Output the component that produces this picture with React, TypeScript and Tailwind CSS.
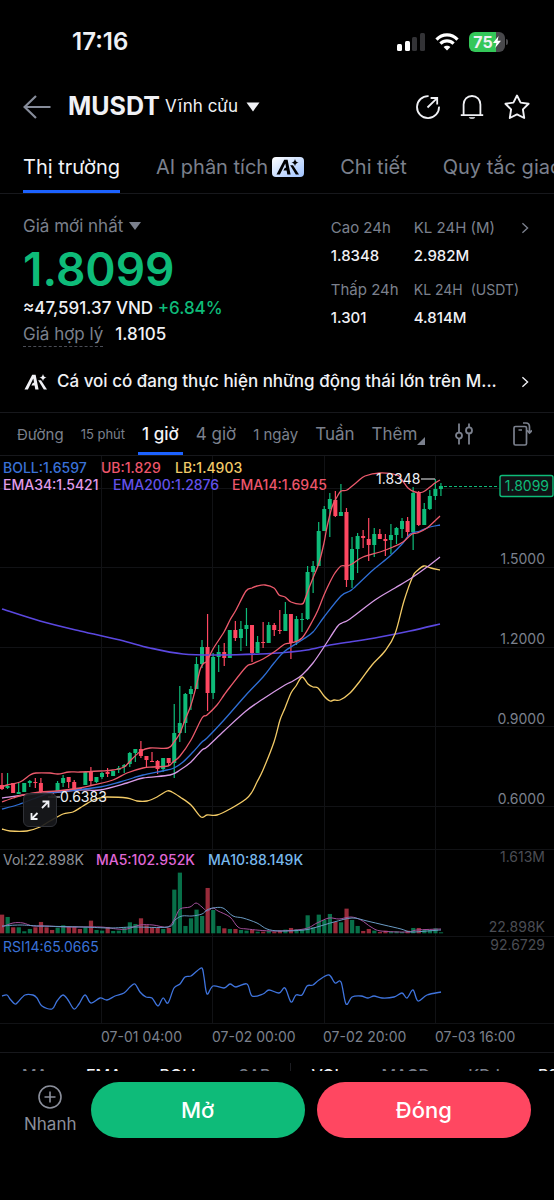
import { clsx } from "clsx";

const tabs = [
  { label: "Thị trường", active: true },
  { label: "AI phân tích", badge: true },
  { label: "Chi tiết" },
  { label: "Quy tắc giao dịch" },
];

const periods = [
  { label: "Đường", className: "text-[15px]" },
  { label: "15 phút", className: "text-[13px]" },
  { label: "1 giờ", className: "text-[17px]", active: true },
  { label: "4 giờ", className: "text-[17px]" },
  { label: "1 ngày", className: "text-[15px]" },
  { label: "Tuần", className: "text-[17px]" },
];

const indicators = [
  { label: "MA", on: false },
  { label: "EMA", on: true },
  { label: "BOLL", on: true },
  { label: "SAR", on: false },
  { label: "VOL", on: true, divider: true },
  { label: "MACD", on: false },
  { label: "KDJ", on: false },
  { label: "RSI", on: true },
];

const GREEN = "#0ebb79";
const RED = "#ff4761";

// 1 = up, 0 = down, then body top, body bottom, wick top, wick bottom
const candles: number[][] = [
  [0, 785, 789, 773, 790], [1, 786, 788, 773, 789], [0, 783, 793, 783, 793], [1, 792, 794, 783, 794],
  [1, 783, 792, 783, 792], [1, 781, 783, 780, 787], [0, 782, 783, 778, 788], [0, 783, 792, 778, 793],
  [0, 791, 792, 791, 792], [0, 791, 794, 791, 796], [1, 783, 791, 781, 791], [1, 778, 783, 775, 787],
  [0, 777, 782, 777, 788], [0, 782, 791, 780, 791], [0, 788, 790, 788, 790], [1, 772, 785, 771, 785],
  [0, 772, 781, 767, 785], [1, 777, 782, 777, 783], [1, 773, 777, 772, 779], [0, 772, 774, 768, 777],
  [1, 771, 776, 771, 776], [1, 768, 770, 766, 773], [1, 765, 767, 764, 773], [1, 753, 764, 752, 767],
  [1, 749, 753, 749, 762], [0, 749, 756, 741, 758], [0, 756, 760, 756, 768], [0, 761, 762, 752, 762],
  [0, 761, 769, 760, 774], [1, 758, 769, 758, 772], [0, 758, 763, 758, 766], [1, 733, 763, 704, 778],
  [1, 723, 733, 686, 742], [1, 694, 723, 693, 733], [1, 689, 694, 686, 710], [1, 664, 689, 657, 689],
  [1, 647, 664, 640, 668], [0, 647, 693, 614, 711], [1, 657, 693, 653, 699], [1, 652, 657, 645, 672],
  [0, 652, 658, 643, 666], [1, 630, 658, 630, 658], [0, 630, 638, 621, 641], [1, 629, 638, 621, 651],
  [1, 625, 629, 608, 646], [0, 625, 653, 625, 662], [1, 642, 653, 636, 653], [0, 642, 643, 622, 648],
  [1, 625, 643, 622, 643], [0, 625, 630, 623, 636], [0, 630, 631, 610, 634], [1, 614, 631, 602, 631],
  [0, 614, 643, 614, 659], [1, 619, 641, 616, 645], [1, 619, 620, 613, 632], [1, 572, 619, 566, 620],
  [1, 566, 572, 561, 593], [1, 531, 566, 522, 566], [1, 509, 531, 506, 531], [1, 499, 509, 493, 537],
  [0, 500, 516, 491, 517], [1, 512, 516, 484, 516], [0, 512, 580, 508, 587], [1, 549, 580, 537, 588],
  [1, 536, 549, 533, 573], [0, 536, 538, 530, 548], [0, 539, 545, 518, 561], [1, 534, 545, 528, 557],
  [0, 534, 539, 529, 539], [0, 539, 541, 534, 556], [1, 535, 540, 524, 554], [1, 528, 535, 527, 544],
  [1, 521, 529, 518, 538], [0, 521, 532, 517, 536], [1, 493, 532, 487, 550], [0, 493, 525, 491, 526],
  [1, 509, 525, 503, 525], [1, 496, 509, 490, 510], [1, 489, 496, 479, 500], [1, 486, 489, 483, 496],
];

const volumes = [
  56, 49, 18, 18, 6, 13, 18, 34, 18, 10, 17, 24, 20, 20, 13, 18, 38, 10, 8, 19,
  7, 8, 18, 33, 28, 45, 24, 18, 17, 13, 16, 131, 182, 22, 45, 71, 52, 136, 70, 22,
  15, 13, 13, 10, 8, 10, 5, 5, 7, 5, 8, 11, 16, 12, 10, 54, 18, 56, 40, 58,
  34, 33, 74, 40, 22, 7, 13, 8, 4, 8, 6, 6, 4, 8, 16, 16, 10, 10, 15, 3,
];

const bollUpper = [
  2, 787, 7, 785, 20, 782, 30, 775, 36, 773, 50, 773, 58, 774, 69, 772, 80, 772, 100, 771, 113, 770, 124, 767, 132, 759,
  141, 751, 150, 748, 168, 748, 174, 742, 180, 733, 185, 720, 191, 705, 196, 687, 200, 670, 203, 664, 207, 661, 213, 649,
  224, 632, 230, 620, 236, 610, 246, 591, 252, 588, 257, 586, 265, 585, 274, 588, 279, 595, 285, 597, 291, 602, 302, 604,
  305, 599, 309, 588, 313, 578, 319, 563, 324, 543, 327, 527, 332, 507, 337, 497, 341, 491, 347, 490, 357, 482, 365, 476,
  380, 473, 397, 475, 402, 480, 408, 488, 415, 492, 423, 492, 430, 487, 435, 483, 440, 480,
];
const ema14 = [
  2, 802, 13, 798, 23, 795, 40, 792, 57, 791, 80, 788, 93, 785, 113, 780, 127, 773, 143, 768, 153, 767, 168, 766,
  173, 762, 180, 756, 191, 740, 202, 718, 207, 715, 217, 705, 224, 695, 230, 687, 246, 667, 252, 664, 263, 659,
  274, 652, 285, 644, 291, 643, 302, 638, 313, 620, 318, 610, 324, 595, 330, 582, 335, 573, 341, 566, 347, 566,
  352, 564, 363, 557, 380, 552, 393, 547, 403, 542, 412, 534, 417, 533, 427, 528, 440, 516,
];
const bollMid = [
  2, 809, 17, 805, 33, 799, 50, 793, 67, 791, 100, 787, 120, 782, 133, 778, 143, 775, 167, 770, 174, 768, 183, 762,
  193, 752, 202, 742, 207, 738, 224, 720, 246, 695, 263, 677, 274, 663, 285, 651, 302, 640, 313, 632, 324, 617,
  341, 596, 350, 591, 355, 587, 373, 570, 390, 556, 403, 543, 410, 534, 420, 531, 430, 527, 440, 525,
];
const ema34 = [
  2, 798, 33, 794, 50, 793, 80, 790, 100, 790, 127, 783, 143, 778, 170, 775, 180, 770, 191, 762, 202, 750, 207, 747,
  224, 731, 246, 711, 263, 699, 285, 685, 293, 681, 302, 675, 313, 663, 324, 647, 337, 627, 342, 623, 350, 619,
  375, 600, 395, 588, 413, 577, 427, 567, 440, 557,
];
const ema200 = [2, 609, 40, 621, 80, 631, 120, 640, 150, 648, 183, 654, 220, 655, 260, 654, 290, 652, 307, 650, 330, 645, 350, 642, 380, 637, 410, 631, 440, 624];
const bollLower = [
  2, 829, 10, 831, 27, 831, 40, 827, 50, 821, 63, 814, 73, 812, 83, 806, 93, 800, 100, 798, 107, 797, 127, 798, 137, 801,
  147, 801, 157, 797, 167, 791, 172, 792, 180, 797, 191, 805, 201, 817, 207, 815, 217, 815, 230, 809, 246, 799, 252, 792,
  257, 782, 263, 770, 274, 742, 280, 720, 285, 708, 291, 693, 296, 686, 302, 677, 308, 684, 313, 687, 318, 688, 324, 696,
  330, 701, 334, 700, 340, 700, 350, 693, 360, 681, 372, 665, 385, 651, 395, 634, 404, 601, 413, 576, 418, 570, 424, 566, 431, 568, 440, 570,
];
const ma5 = [
  2, 927, 13, 923, 23, 923, 33, 926, 47, 926, 67, 927, 100, 927, 117, 929, 127, 929, 140, 925, 153, 925, 168, 927,
  175, 918, 180, 909, 190, 907, 196, 903, 202, 907, 207, 911, 213, 908, 218, 911, 230, 917, 238, 927, 247, 929,
  274, 931, 304, 929, 317, 923, 329, 918, 339, 919, 351, 917, 361, 920, 371, 927, 381, 931, 407, 932, 417, 930, 441, 929,
];
const ma10 = [
  2, 926, 20, 925, 40, 926, 83, 927, 110, 928, 133, 927, 168, 927, 175, 920, 182, 916, 192, 916, 202, 914, 207, 910,
  213, 908, 223, 908, 233, 916, 243, 918, 257, 923, 267, 929, 280, 931, 304, 930, 317, 927, 334, 922, 352, 918,
  367, 921, 384, 925, 401, 929, 411, 932, 427, 931, 441, 930,
];
const rsi = [
  2, 996, 7, 995, 10, 999, 15, 1004, 18, 1002, 25, 995, 33, 995, 37, 998, 42, 1006, 52, 1009, 57, 1001, 63, 995, 68, 1000,
  74, 1009, 79, 1004, 85, 995, 91, 1003, 100, 998, 107, 1000, 115, 996, 124, 993, 130, 987, 135, 984, 140, 992, 146, 997,
  152, 998, 158, 1006, 163, 998, 168, 1003, 174, 988, 180, 984, 185, 977, 191, 976, 197, 971, 202, 968, 204, 977,
  207, 994, 213, 986, 224, 988, 230, 984, 236, 987, 247, 984, 252, 996, 263, 994, 269, 990, 279, 993, 285, 988, 291, 1002,
  296, 995, 302, 995, 307, 986, 313, 985, 319, 980, 329, 975, 335, 983, 341, 982, 346, 1004, 352, 997, 361, 996,
  368, 998, 374, 996, 382, 998, 394, 997, 402, 993, 407, 998, 413, 990, 418, 1001, 427, 995, 441, 992,
];

const candleX = (i: number) => 2 + i * 5.556;

// flat [x, y, x, y, ...] list to a smooth path through every point
function smooth(flat: number[]) {
  const n = flat.length / 2;
  const at = (i: number) => {
    const k = Math.max(0, Math.min(n - 1, i));
    return [flat[k * 2], flat[k * 2 + 1]];
  };
  let d = `M${flat[0]} ${flat[1]}`;
  for (let i = 0; i < n - 1; i++) {
    const [p0, p1, p2, p3] = [at(i - 1), at(i), at(i + 1), at(i + 2)];
    d += `C${p1[0] + (p2[0] - p0[0]) / 6} ${p1[1] + (p2[1] - p0[1]) / 6} ${p2[0] - (p3[0] - p1[0]) / 6} ${p2[1] - (p3[1] - p1[1]) / 6} ${p2[0]} ${p2[1]}`;
  }
  return d;
}

function Line({ points, color, width = 1.3 }: { points: number[]; color: string; width?: number }) {
  return <path d={smooth(points)} fill="none" stroke={color} strokeWidth={width} strokeLinejoin="round" />;
}

function AiMark({ className }: { className?: string }) {
  return (
    <svg viewBox="0 0 24 16" className={className} fill="currentColor" aria-hidden="true">
      <path d="M0.5 15.5 L8.2 0.8 H11.6 L14.6 15.5 H11.3 L10.6 11.4 H7.4 L8.9 8.8 H10.1 L9.3 4.6 L3.9 15.5 Z" />
      <path d="M14.2 6.2 H17 L23 15.5 H19.8 Z" />
      <path d="M19 0 Q19.5 3 22.6 3.6 Q19.5 4.2 19 7.2 Q18.5 4.2 15.4 3.6 Q18.5 3 19 0 Z" />
    </svg>
  );
}

function Chevron({ className }: { className?: string }) {
  return (
    <svg viewBox="0 0 8 14" className={clsx("h-3 w-2", className)} fill="none" stroke="currentColor" strokeWidth="1.6" aria-hidden="true">
      <path d="M1 1.5 L7 7 L1 12.5" />
    </svg>
  );
}

function StatusBar() {
  return (
    <div className="flex h-[84px] items-center justify-between pr-[46px] pl-[72px]">
      <span className="text-2xl font-semibold">17:16</span>
      <div className="flex items-center gap-[10px]">
        <svg viewBox="0 0 28 18" className="h-[18px] w-7" aria-hidden="true">
          <rect x="0" y="11" width="5" height="7" rx="1.5" fill="#fff" />
          <rect x="8" y="8" width="5" height="10" rx="1.5" fill="#fff" />
          <rect x="15" y="4" width="5" height="14" rx="1.5" fill="#333336" />
          <rect x="23" y="0" width="5" height="18" rx="1.5" fill="#333336" />
        </svg>
        <svg viewBox="0 0 24 18" className="h-[18px] w-6" fill="none" stroke="#fff" strokeWidth="3.2" aria-hidden="true">
          <path d="M1.5 6.6 C7.5 0.4 16.5 0.4 22.5 6.6" />
          <path d="M5.4 10.6 C9.2 6.9 14.8 6.9 18.6 10.6" />
          <path d="M12 17.6 L8.6 14 C10.4 12.2 13.6 12.2 15.4 14 Z" fill="#fff" stroke="none" />
        </svg>
        <div className="flex items-center gap-px">
          <div className="flex h-5 w-9 items-center justify-center rounded-md bg-linear-to-r from-[#34c759] from-75% to-[#48484b] to-75%">
            <span className="text-base font-bold">75</span>
            <svg viewBox="0 0 8 12" className="h-3 w-2" fill="#fff" aria-hidden="true">
              <path d="M5.6 0 L0 7 H3.4 L2.2 12 L8 4.8 H4.6 Z" />
            </svg>
          </div>
          <span className="h-[6px] w-[2px] rounded-r-full bg-[#48484b]" />
        </div>
      </div>
    </div>
  );
}

function Header() {
  return (
    <header className="flex h-11 items-center justify-between pt-[2px] pr-6 pl-[23px]">
      <div className="flex items-center">
        <button aria-label="Quay lại" className="text-[#868c9a]">
          <svg viewBox="0 0 28 24" className="h-6 w-7" fill="none" stroke="currentColor" strokeWidth="2.2">
            <path d="M13 1 L1.6 12 L13 23 M1.6 12 H27.5" />
          </svg>
        </button>
        <h1 className="ml-[17px] text-[25px] font-bold">MUSDT</h1>
        <button className="ml-[5px] flex items-center gap-2 text-[17px]">
          Vĩnh cửu
          <svg viewBox="0 0 14 10" className="h-[10px] w-[14px]" fill="currentColor" aria-hidden="true">
            <path d="M0.5 0.5 H13.5 L7 9.5 Z" />
          </svg>
        </button>
      </div>
      <div className="flex items-center gap-5">
        <button aria-label="Chia sẻ">
          <svg viewBox="0 0 24 24" className="size-6" fill="none" stroke="currentColor" strokeWidth="1.8">
            <path d="M12.6 1.1 A11 11 0 1 0 23 11.6" />
            <path d="M11.5 12.5 L20.6 3.6 M14.6 3 H21.2 V9.6" />
          </svg>
        </button>
        <button aria-label="Thông báo">
          <svg viewBox="0 0 24 24" className="size-6" fill="none" stroke="currentColor" strokeWidth="1.8">
            <path d="M0.8 20.2 H23.2 M3.6 20.2 V9.6 C3.6 4.6 7.2 1 12 1 C16.8 1 20.4 4.6 20.4 9.6 V20.2" />
            <path d="M8.8 22.2 H15.2 C14.6 24.4 9.4 24.4 8.8 22.2 Z" fill="currentColor" stroke="none" />
          </svg>
        </button>
        <button aria-label="Yêu thích">
          <svg viewBox="0 0 26 26" className="size-[26px]" fill="none" stroke="currentColor" strokeWidth="1.9" strokeLinejoin="round">
            <path d="M13 1.5 L16.6 8.6 L24.6 9.8 L18.9 15.4 L20.2 24 L13 20.4 L5.8 24 L7.1 15.4 L1.4 9.8 L9.4 8.6 Z" />
          </svg>
        </button>
      </div>
    </header>
  );
}

function MainTabs() {
  return (
    <nav className="flex h-[66px] items-stretch gap-9 overflow-hidden border-b border-[#17181c] pt-4 pl-[23px]">
      {tabs.map((tab) => (
        <button
          key={tab.label}
          className={clsx(
            "flex shrink-0 items-center gap-1 border-b-[3px] text-xl whitespace-nowrap",
            tab.active ? "border-[#1c62ff] text-[#f2f3f7]" : "border-transparent text-[#7b808d]"
          )}
        >
          {tab.label}
          {tab.badge && (
            <span className="flex h-5 w-8 items-center justify-center rounded bg-linear-to-br from-white to-[#9fc2ff] text-black">
              <AiMark className="h-4 w-6" />
            </span>
          )}
        </button>
      ))}
    </nav>
  );
}

function Stat({ label, value, small }: { label: string; value: string; small?: boolean }) {
  return (
    <div>
      <dt className={clsx("leading-6 whitespace-pre text-[#7b808d]", small ? "text-sm" : "text-[15px]")}>{label}</dt>
      <dd className="mt-1 text-[15px] leading-6 font-medium">{value}</dd>
    </div>
  );
}

function PriceSummary() {
  return (
    <section className="flex justify-between pt-5 pr-[25px] pl-[23px]">
      <div>
        <button className="flex items-center gap-[6px] text-[17px] leading-6 text-[#7b808d]">
          Giá mới nhất
          <svg viewBox="0 0 12 8" className="h-2 w-3" fill="currentColor" aria-hidden="true">
            <path d="M0 0 H12 L6 8 Z" />
          </svg>
        </button>
        <p className="h-[60px] text-[46px] leading-[62px] font-semibold text-[#0ebb79]">1.8099</p>
        <p className="text-[17px] leading-5 font-medium">
          ≈47,591.37 VND <span className="text-[#0ebb79]">+6.84%</span>
        </p>
        <p className="mt-1 flex gap-3 text-[17px] leading-6">
          <span className="border-b border-dashed border-[#4a4d56] text-[#7b808d]">Giá hợp lý</span>
          <span className="font-medium">1.8105</span>
        </p>
      </div>
      <div className="flex items-start gap-[2px] pt-[2px]">
        <dl className="grid grid-cols-[83px_auto] gap-y-[10px]">
          <Stat label="Cao 24h" value="1.8348" />
          <Stat label="KL 24H (M)" value="2.982M" />
          <Stat label="Thấp 24h" value="1.301" />
          <Stat label="KL 24H  (USDT)" value="4.814M" small />
        </dl>
        <button aria-label="Xem thêm" className="pt-[6px] text-[#7b808d]">
          <Chevron />
        </button>
      </div>
    </section>
  );
}

function Insight() {
  return (
    <a href="#insight" className="flex h-[66px] items-center border-b border-[#17181c] pt-1 pr-[25px] pl-6">
      <AiMark className="h-4 w-6 shrink-0" />
      <span className="ml-[9px] min-w-0 flex-1 truncate text-[17px] font-medium">
        Cá voi có đang thực hiện những động thái lớn trên M...
      </span>
      <Chevron className="ml-4" />
    </a>
  );
}

function PeriodTabs() {
  return (
    <div className="flex h-[43px] items-stretch gap-[9px] border-b border-[#17181c] pr-[22px] pl-[13px] text-[#7b808d]">
      {periods.map((p) => (
        <button
          key={p.label}
          className={clsx(
            "border-b-[3px] px-1 pt-[5px] whitespace-nowrap",
            p.className,
            p.active ? "border-[#1c62ff] font-medium text-[#f2f3f7]" : "border-transparent"
          )}
        >
          {p.label}
        </button>
      ))}
      <button className="flex items-center pt-[2px] pl-1 text-[17px]">
        Thêm
        <svg viewBox="0 0 8 8" className="mt-3 size-2" fill="currentColor" aria-hidden="true">
          <path d="M8 0 V8 H0 Z" />
        </svg>
      </button>
      <button aria-label="Cài đặt chỉ báo" className="mr-[31px] ml-auto">
        <svg viewBox="0 0 18 22" className="h-[22px] w-[18px]" fill="none" stroke="currentColor" strokeWidth="1.8">
          <path d="M4 0.5 V9 M4 16 V21.5 M14 0.5 V4 M14 11 V21.5" />
          <circle cx="4" cy="12.6" r="3" />
          <circle cx="14" cy="7.4" r="3" />
        </svg>
      </button>
      <button aria-label="Xoay màn hình">
        <svg viewBox="0 0 19 24" className="h-6 w-[19px]" fill="none" stroke="currentColor" strokeWidth="1.7">
          <rect x="1" y="4.5" width="12.5" height="18.5" rx="1.5" />
          <path d="M5.5 8 H9 M10 1 H13 C15.6 1 16.5 2.4 16.5 5 V10.5 M14 8.4 L16.5 11 L19 8.4" />
        </svg>
      </button>
    </div>
  );
}

function Chart() {
  return (
    <section className="relative border-b border-[#17181c]">
      <svg viewBox="0 456 554 596" className="block h-auto w-full" role="img" aria-label="Biểu đồ MUSDT 1 giờ">
        <g stroke="#111215" strokeWidth="1">
          {[101.5, 212.5, 324.5, 435.5].map((x) => (
            <path key={x} d={`M${x} 456 V1023`} />
          ))}
          {[488.5, 567.5, 647.5, 726.5, 806.5, 849.5, 936.5, 1023.5].map((y) => (
            <path key={y} d={`M0 ${y} H554`} />
          ))}
        </g>

        {candles.map(([up, top, bottom, high, low], i) => {
          const x = candleX(i);
          const color = up ? GREEN : RED;
          return (
            <g key={i} fill={color}>
              <rect x={x - 0.6} y={high} width={1.2} height={low - high} />
              <rect x={x - 2} y={top} width={4} height={bottom - top} />
              <rect x={x - 2} y={933.3 - volumes[i] / 3} width={4.2} height={volumes[i] / 3} opacity={0.6} />
            </g>
          );
        })}

        <Line points={ema200} color="#5b48e0" width={1.6} />
        <Line points={bollLower} color="#f3cb67" />
        <Line points={ema34} color="#d79ae6" />
        <Line points={bollMid} color="#2f6fd6" />
        <Line points={ema14} color="#ec5a6c" />
        <Line points={bollUpper} color="#ec5a6c" />
        <Line points={ma5} color="#a4509c" width={1} />
        <Line points={ma10} color="#6a9bc4" width={1} />
        <Line points={rsi} color="#3f74dd" />

        <g fill="#f0f1f5" stroke="none" className="text-sm">
          <text x="376" y="484">1.8348</text>
          <text x="60" y="802">0.6383</text>
          <path d="M421 478.5 H435 V479.5 H421 Z M48 796.5 H60 V797.5 H48 Z" />
        </g>

        <path d="M444 486.5 H499" stroke={GREEN} strokeWidth="1.2" strokeDasharray="3 2" />
        <rect x="500" y="475.5" width="53" height="21" rx="2" fill="#101114" stroke={GREEN} strokeWidth="1.4" />
        <text x="549" y="491" textAnchor="end" fill={GREEN} className="text-sm">1.8099</text>

        <g fill="#7b808d" textAnchor="end" className="text-sm">
          <text x="545" y="564">1.5000</text>
          <text x="545" y="644">1.2000</text>
          <text x="545" y="724">0.9000</text>
          <text x="545" y="804">0.6000</text>
        </g>
        <g fill="#4b4d54" textAnchor="end" className="text-sm">
          <text x="545" y="862">1.613M</text>
          <text x="545" y="932">22.898K</text>
          <text x="545" y="950">92.6729</text>
        </g>
        <g fill="#7b808d" className="text-sm">
          <text x="101" y="1042">07-01 04:00</text>
          <text x="212" y="1042">07-02 00:00</text>
          <text x="323" y="1042">07-02 20:00</text>
          <text x="435" y="1042">07-03 16:00</text>
        </g>
        <g className="text-sm font-medium">
          <text x="3" y="473" fill="#3a72d8">BOLL:1.6597</text>
          <text x="101" y="473" fill="#ee566b">UB:1.829</text>
          <text x="175" y="473" fill="#f3cb67">LB:1.4903</text>
          <text x="3" y="490" fill="#e19cea">EMA34:1.5421</text>
          <text x="113" y="490" fill="#6352ea">EMA200:1.2876</text>
          <text x="232" y="490" fill="#ee566b">EMA14:1.6945</text>
          <text x="96" y="865" fill="#e068d8">MA5:102.952K</text>
          <text x="208" y="865" fill="#78b9ee">MA10:88.149K</text>
        </g>
        <g className="text-sm">
          <text x="3" y="865" fill="#8d9098">Vol:22.898K</text>
          <text x="3" y="952" fill="#3a72d8">RSI14:65.0665</text>
        </g>
      </svg>
      <button
        aria-label="Toàn màn hình"
        className="absolute top-[337px] left-[23px] flex size-[34px] items-center justify-center rounded-md border border-[#303238] bg-[#17181c]/90"
      >
        <svg viewBox="0 0 20 20" className="size-5" fill="none" stroke="currentColor" strokeWidth="1.8">
          <path d="M12 8 L18.5 1.5 M12.5 1.5 H18.5 V7.5 M7.5 13 L1.5 19 M1.5 13 V19 H7.5" />
        </svg>
      </button>
    </section>
  );
}

function IndicatorRow() {
  return (
    <div className="flex h-[18px] items-start gap-[38px] overflow-hidden pt-[10px] pl-[22px] text-base leading-6 font-medium">
      {indicators.map((item) => (
        <button
          key={item.label}
          className={clsx(
            "shrink-0 whitespace-nowrap",
            item.divider && "-ml-[18px] border-l border-[#1c1d22] pl-5",
            item.on ? "text-[#f2f3f7]" : "text-[#7b808d]"
          )}
        >
          {item.label}
        </button>
      ))}
    </div>
  );
}

function BottomBar() {
  return (
    <div className="flex items-start pt-[11px] pr-[23px] pb-[62px] pl-6">
      <button className="flex flex-col items-center gap-[3px] pt-[3px] text-[17px] leading-6 text-[#8b8f9b]">
        <svg viewBox="0 0 24 24" className="size-6" fill="none" stroke="currentColor" strokeWidth="1.6" aria-hidden="true">
          <circle cx="12" cy="12" r="11" />
          <path d="M12 6.5 V17.5 M6.5 12 H17.5" />
        </svg>
        Nhanh
      </button>
      <div className="ml-[14px] grid flex-1 grid-cols-2 gap-3 text-[22px] font-medium text-white">
        <button className="h-14 rounded-full bg-[#0ebb79]">Mở</button>
        <button className="h-14 rounded-full bg-[#ff4761]">Đóng</button>
      </div>
    </div>
  );
}

export default function App() {
  return (
    <main className="min-h-screen bg-black font-['Inter','Noto_Sans',sans-serif] text-[#f0f1f5]">
      <StatusBar />
      <Header />
      <MainTabs />
      <PriceSummary />
      <Insight />
      <PeriodTabs />
      <Chart />
      <IndicatorRow />
      <BottomBar />
    </main>
  );
}
